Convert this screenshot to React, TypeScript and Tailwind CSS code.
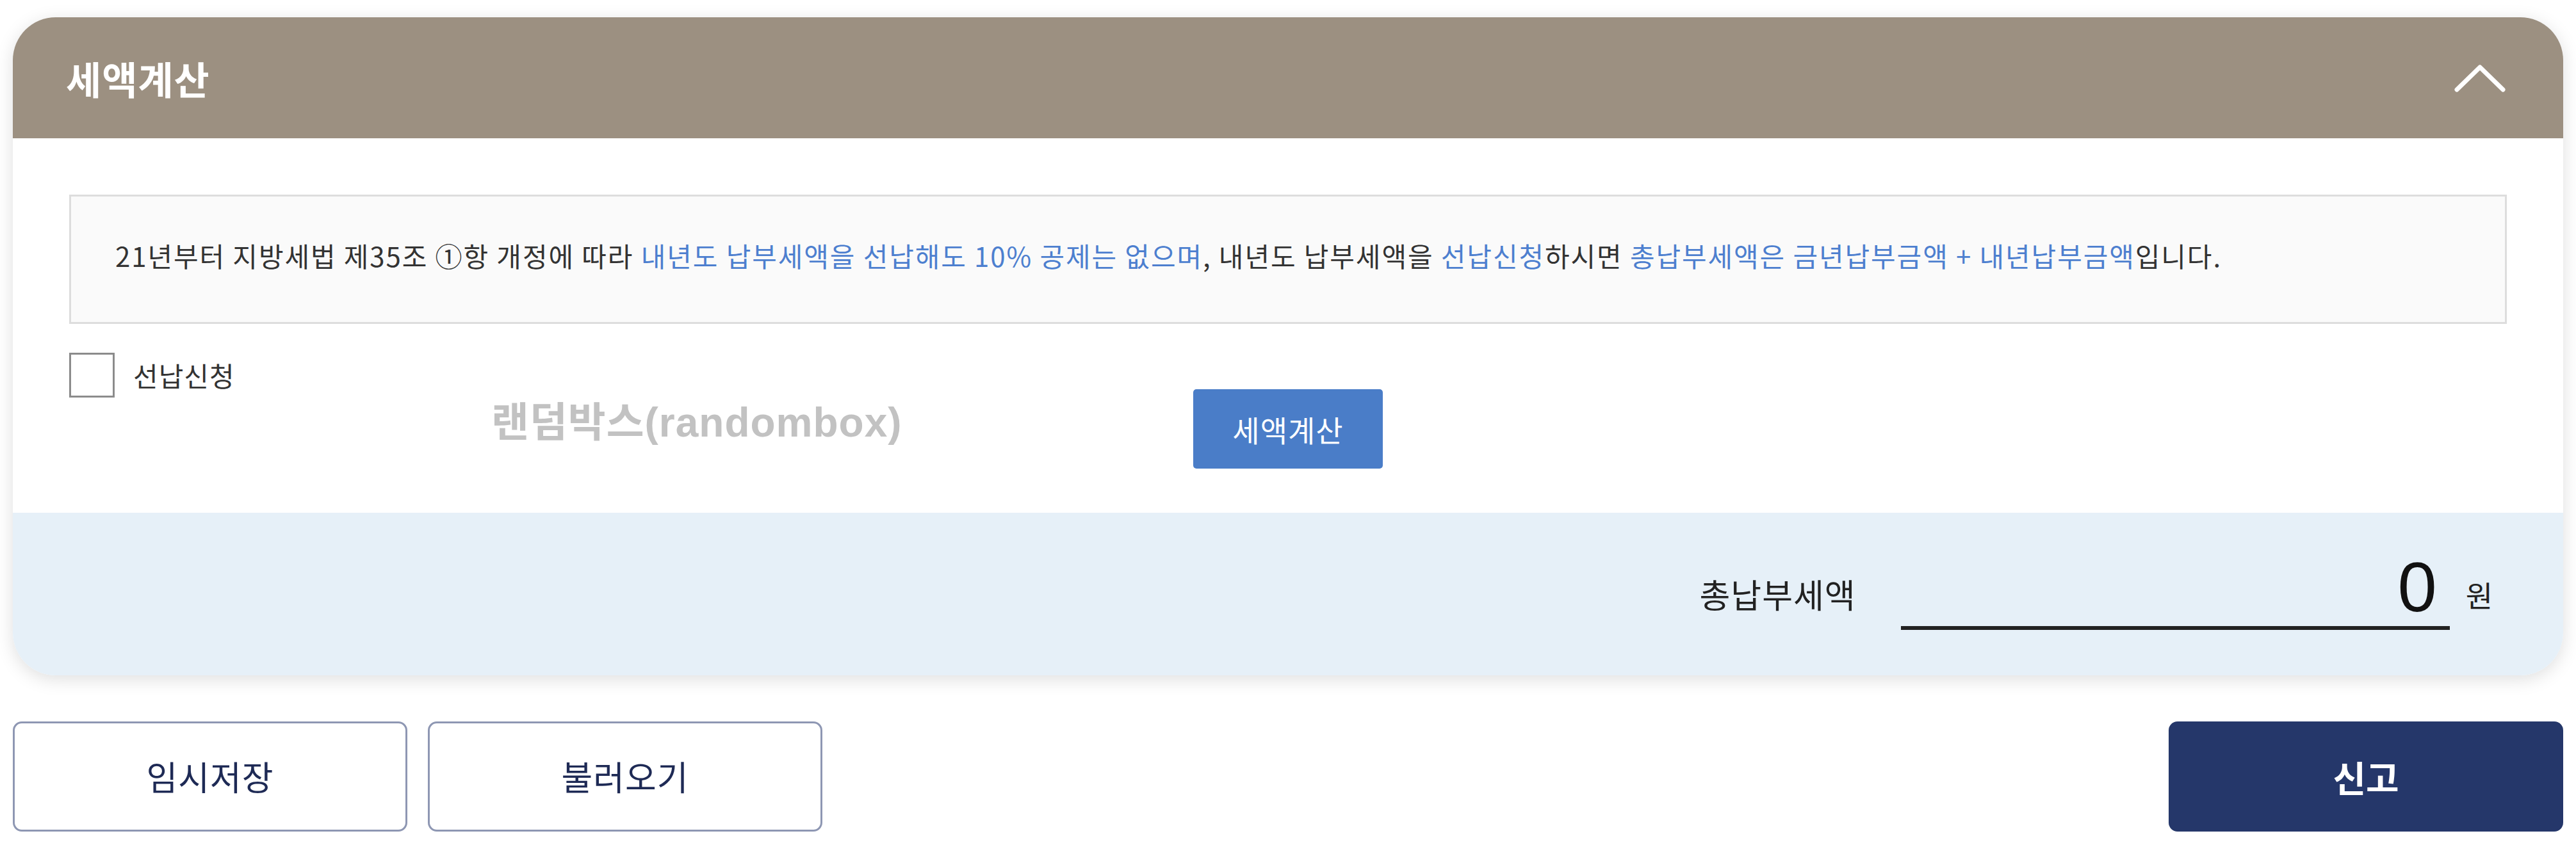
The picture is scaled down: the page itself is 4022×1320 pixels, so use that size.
import { useState } from "react";

const kr = "font-['Noto_Sans_CJK_KR','Noto_Sans',sans-serif]";

export default function App() {
  const [prepay, setPrepay] = useState(false);

  return (
    <div className={`min-h-[1320px] bg-white px-[20px] pt-[27px] ${kr}`}>
      <section className="overflow-hidden rounded-[67px] bg-white shadow-[0_6px_28px_rgba(0,0,0,0.13)]">
        <header className="flex h-[189px] items-center justify-between bg-[#9c9081] pl-[83px] pr-[90px]">
          <h2 className="text-[60px] font-bold leading-none tracking-[1px] text-white">세액계산</h2>
          <button aria-label="접기" className="flex h-[44px] w-[80px] items-center justify-center">
            <svg viewBox="0 0 80 44" className="h-[44px] w-[80px]" fill="none" stroke="#fff" strokeWidth="7" strokeLinecap="round" strokeLinejoin="round">
              <polyline points="4,40 40,5 76,40" />
            </svg>
          </button>
        </header>

        <div className="relative px-[88px] pb-[69px] pt-[88px]">
          <div className="flex h-[202px] items-center border-[3px] border-[#dddddd] bg-[#fafafa] pb-[12px] pl-[69px]">
            <p className="whitespace-nowrap text-[42px] leading-none tracking-[1.9px] text-[#333333]">
              21년부터 지방세법 제35조 ①항 개정에 따라{" "}
              <span className="text-[#4d7fcf]">내년도 납부세액을 선납해도 10% 공제는 없으며</span>, 내년도 납부세액을{" "}
              <span className="text-[#4d7fcf]">선납신청</span>하시면{" "}
              <span className="text-[#4d7fcf]">총납부세액은 금년납부금액 + 내년납부금액</span>입니다.
            </p>
          </div>

          <div className="mt-[45px] grid grid-cols-[1fr_auto_1fr]">
            <label className="flex cursor-pointer items-center gap-[29px] self-start">
              <input
                type="checkbox"
                checked={prepay}
                onChange={(e) => setPrepay(e.target.checked)}
                className="h-[70px] w-[71px] appearance-none border-[3px] border-[#8c8c8c] bg-white checked:bg-[#4a7dc8]"
              />
              <span className="text-[42px] leading-none tracking-[1px] text-[#333333]">선납신청</span>
            </label>
            <button className="mt-[57px] h-[124px] w-[296px] rounded-[5px] bg-[#4a7dc8] text-[46px] tracking-[1px] text-white">
              세액계산
            </button>
            <div />
          </div>

          <span className="pointer-events-none absolute left-[747px] top-[412px] select-none whitespace-nowrap font-['Liberation_Sans','Noto_Sans_CJK_KR',sans-serif] text-[64px] font-bold leading-none tracking-[1px] text-[#c2c2c2]">
            랜덤박스(randombox)
          </span>
        </div>

        <div className="flex h-[254px] items-center justify-end bg-[#e6f0f8] pr-[110px]">
          <span className="text-[52px] leading-none tracking-[1px] text-[#222222]">총납부세액</span>
          <div className="ml-[70px] flex h-[112px] w-[857px] items-end justify-end border-b-[6px] border-[#222222] pb-[6px] pr-[20px]">
            <span className="font-['Liberation_Sans',sans-serif] text-[110px] leading-none text-[#111111]">0</span>
          </div>
          <span className="ml-[25px] text-[46px] leading-none text-[#222222]">원</span>
        </div>
      </section>

      <div className="mt-[72px] flex items-center justify-between">
        <div className="flex gap-[32px]">
          <button className="h-[172px] w-[616px] rounded-[14px] border-[3px] border-[#8e97b3] bg-white text-[53px] tracking-[1px] text-[#1e2a55]">
            임시저장
          </button>
          <button className="h-[172px] w-[616px] rounded-[14px] border-[3px] border-[#8e97b3] bg-white text-[53px] tracking-[1px] text-[#1e2a55]">
            불러오기
          </button>
        </div>
        <button className="h-[172px] w-[616px] rounded-[14px] bg-[#25376a] text-[56px] font-bold text-white">
          신고
        </button>
      </div>
    </div>
  );
}
